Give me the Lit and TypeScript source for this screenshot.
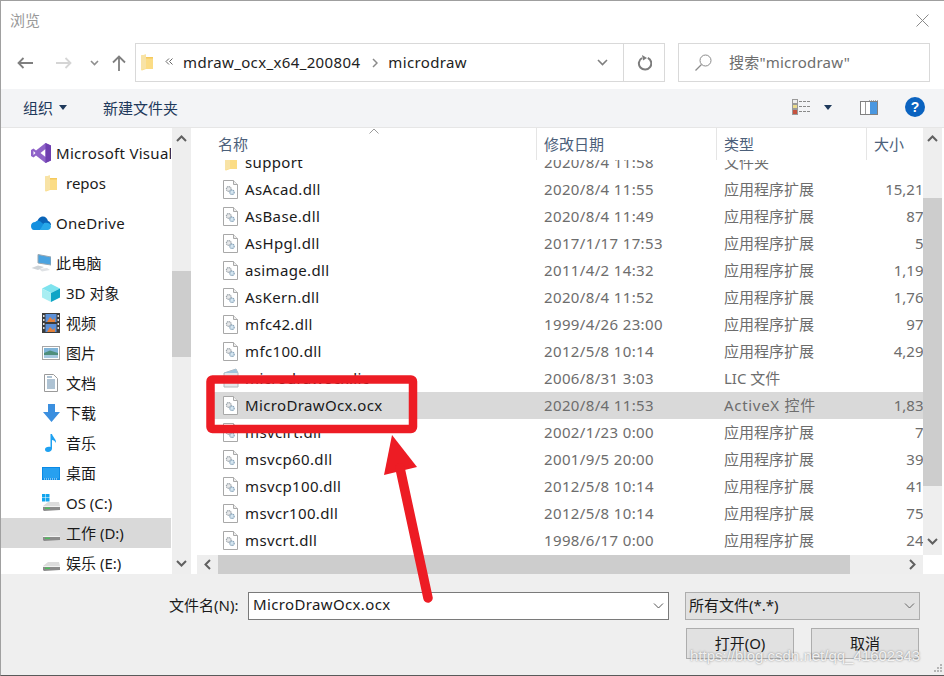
import { LitElement, html, css, svg } from "lit";
import { customElement } from "lit/decorators.js";

const folder = (w = 12, h = 17) => html`<svg class="ic" width=${w} height=${h} viewBox="0 0 12 17">
  <path d="M0 1.5 L5 0.5 L5 3 L12 3 L12 15 L5 15 L1 16.5 L0 16Z" fill="#fbdc85"/>
  <path d="M0 1.5 L5 0.5 L5 14.5 L0 16Z" fill="#f8e3a6"/><path d="M5 3 H12 V4.5 H5Z" fill="#f5c95c"/></svg>`;

const dll = html`<svg class="ic" width="15" height="19" viewBox="0 0 15 19">
  <path d="M0.5 0.5 H10.5 L14.5 4.5 V18.5 H0.5Z" fill="#fff" stroke="#a8a8a8"/>
  <path d="M10.5 0.5 V4.5 H14.5" fill="#eee" stroke="#a8a8a8"/>
  <circle cx="5.8" cy="9" r="2.4" fill="#e6e8ea" stroke="#9aa2a8" stroke-width="1.2" stroke-dasharray="1.2 .5"/>
  <circle cx="9" cy="12.3" r="2.2" fill="#d5e6f1" stroke="#86a2b8" stroke-width="1.2" stroke-dasharray="1.2 .5"/></svg>`;

const lic = html`<svg class="ic" width="17" height="21" viewBox="0 0 17 21">
  <path d="M2 5 L14 1 L16 5 L16 19 L2 19Z" fill="#e4e8ea" stroke="#b2b8bc"/><path d="M2 5 L14 1 L16 5Z" fill="#9fc4dc"/></svg>`;

const chevUp = html`<svg width="11" height="7" viewBox="0 0 11 7"><path d="M1 6 L5.5 1.5 L10 6" fill="none" stroke="#606060" stroke-width="2"/></svg>`;
const chevDown = html`<svg width="11" height="7" viewBox="0 0 11 7"><path d="M1 1 L5.5 5.5 L10 1" fill="none" stroke="#606060" stroke-width="2"/></svg>`;
const chevLeft = html`<svg width="7" height="11" viewBox="0 0 7 11"><path d="M6 1 L1.5 5.5 L6 10" fill="none" stroke="#606060" stroke-width="2"/></svg>`;
const chevRight = html`<svg width="7" height="11" viewBox="0 0 7 11"><path d="M1 1 L5.5 5.5 L1 10" fill="none" stroke="#606060" stroke-width="2"/></svg>`;
const thin = (c: string) => html`<svg width="11" height="6" viewBox="0 0 11 6"><path d="M1 0.5 L5.5 5 L10 0.5" fill="none" stroke=${c} stroke-width="1"/></svg>`;

const drive = (win = false) => html`<svg class="ic" width="20" height="18" viewBox="0 0 20 18">
  ${win ? svg`<g fill="#12a5ee"><rect x="1" y="0" width="3.5" height="3.5"/><rect x="5" y="0" width="3.5" height="3.5"/><rect x="1" y="4" width="3.5" height="3.5"/><rect x="5" y="4" width="3.5" height="3.5"/></g>` : ""}
  <path d="M2 12 L7 8 L18 8 L19 12Z" fill="#dcdcdc"/><path d="M2 12 H19 V16 L3 17 L2 16Z" fill="#8b8b8b"/><path d="M4 13.5 H9 V15 H4Z" fill="#4fbb5d"/><path d="M2 12 H19 V13 H2Z" fill="#f2f2f2"/></svg>`;

const navIcons: Record<string, unknown> = {
  vs: html`<svg class="ic" width="20" height="20" viewBox="0 0 20 20">
    <path d="M14.5 0 L20 2.5 V17.5 L14.5 20 L5 12.5 L2.5 14.5 L0 13 V7 L2.5 5.5 L5 7.5Z" fill="#8f63c8"/>
    <path d="M14.5 6 L9.5 10 L14.5 14Z M2.5 8 V12 L4.5 10Z" fill="#fff"/><path d="M14.5 0 L20 2.5 V17.5 L14.5 20Z" fill="#6f3fb0"/></svg>`,
  cloud: html`<svg class="ic" width="20" height="14" viewBox="0 0 20 14">
    <path d="M6 7 C6.5 3 9 0.5 12 0.5 C14.5 0.5 16 2 17 5 C18.8 5.5 20 7 20 9 L12 9Z" fill="#0a64b8"/>
    <path d="M0 10 C0 7.5 2 6 4.2 6 C6 4 9 4.5 10.5 6.5 L16 11 L9 14 H3 C1 14 0 12 0 10Z" fill="#1490df"/>
    <path d="M9 14 L13 7 C16 6 19.5 7 20 10 C20 12.5 18.5 14 16.5 14Z" fill="#28a8ea"/></svg>`,
  pc: html`<svg class="ic" width="20" height="18" viewBox="0 0 20 18">
    <path d="M7 0.5 L20 3 V11 L7 9Z" fill="#4aa3e0" stroke="#9aa7b0"/><path d="M0.5 14 L7 11.5 L13 13 L7 16Z" fill="#cfd4d8"/><path d="M8 15 L16 14 L19 16 L11 17.5Z" fill="#dfe2e5"/></svg>`,
  cube: html`<svg class="ic" width="18" height="18" viewBox="0 0 18 18">
    <path d="M9 0 L18 4.5 L9 9 L0 4.5Z" fill="#7fe3ee"/><path d="M0 4.5 L9 9 V18 L0 13.5Z" fill="#a9eef2"/><path d="M18 4.5 L9 9 V18 L18 13.5Z" fill="#0fa5c6"/></svg>`,
  film: html`<svg class="ic" width="18" height="20" viewBox="0 0 18 20">
    <rect width="18" height="20" fill="#3c3c3c"/><rect x="3.5" y="1" width="11" height="8" fill="#5b8fd6"/><rect x="3.5" y="11" width="11" height="8" fill="#5b8fd6"/>
    <path d="M5 9 L8 4 L11 7 L13 5 V9Z M5 19 L8 14 L11 17 L13 15 V19Z" fill="#e3813c"/>
    <g fill="#ddd"><rect x="1" y="2" width="1.5" height="2"/><rect x="1" y="6" width="1.5" height="2"/><rect x="1" y="10" width="1.5" height="2"/><rect x="1" y="14" width="1.5" height="2"/><rect x="15.5" y="2" width="1.5" height="2"/><rect x="15.5" y="6" width="1.5" height="2"/><rect x="15.5" y="10" width="1.5" height="2"/><rect x="15.5" y="14" width="1.5" height="2"/></g></svg>`,
  pic: html`<svg class="ic" width="18" height="14" viewBox="0 0 18 14">
    <rect x="0.5" y="0.5" width="17" height="13" fill="#fff" stroke="#a6a6a6"/><rect x="2" y="2" width="14" height="5" fill="#7fb4d8"/><path d="M2 7 L8 4.5 L16 7 V12 H2Z" fill="#4e8f7c"/><rect x="2" y="9" width="14" height="3" fill="#a6c9e0"/></svg>`,
  doc: html`<svg class="ic" width="14" height="18" viewBox="0 0 14 18">
    <path d="M0.5 0.5 H9.5 L13.5 4.5 V17.5 H0.5Z" fill="#fff" stroke="#9a9a9a"/><path d="M3 3 H8 M3 6 H11 M3 8 H11 M3 10 H11 M3 12 H11 M3 14 H11" stroke="#5f87a8" stroke-width="1"/></svg>`,
  dl: html`<svg class="ic" width="17" height="18" viewBox="0 0 17 18"><path d="M5 0 H12 V8 H17 L8.5 18 L0 8 H5Z" fill="#3b8fdf"/></svg>`,
  music: html`<svg class="ic" width="12" height="18" viewBox="0 0 12 18"><path d="M5.5 0 H7 C7.5 3 11.5 5 11 9 C10 7 8.5 6 7 6 V14.5 C7 16.5 5 18 3 18 C1 18 0 16.8 0 15.5 C0 13.5 2.5 12.3 5.5 13Z" fill="#1ea1f1"/></svg>`,
  desk: html`<svg class="ic" width="18" height="13" viewBox="0 0 18 13"><rect width="18" height="13" fill="#0a8ae6"/><rect x="1" y="1" width="16" height="10.5" fill="#27a0f0"/><path d="M2 12 H16" stroke="#e6f4ff" stroke-dasharray="1 1" stroke-width="1"/></svg>`,
  os: drive(true),
  drive: drive(false),
  folder: folder(12, 17),
};

const navGroups = [
  { sp: false, lv: 0, ic: "vs", t: "Microsoft Visual Studio" },
  { sp: false, lv: 1, ic: "folder", t: "repos" },
  { sp: true, lv: 0, ic: "cloud", t: "OneDrive" },
  { sp: true, lv: 0, ic: "pc", t: "此电脑" },
  { sp: false, lv: 1, ic: "cube", t: "3D 对象" },
  { sp: false, lv: 1, ic: "film", t: "视频" },
  { sp: false, lv: 1, ic: "pic", t: "图片" },
  { sp: false, lv: 1, ic: "doc", t: "文档" },
  { sp: false, lv: 1, ic: "dl", t: "下载" },
  { sp: false, lv: 1, ic: "music", t: "音乐" },
  { sp: false, lv: 1, ic: "desk", t: "桌面" },
  { sp: false, lv: 1, ic: "os", t: "OS (C:)" },
  { sp: false, lv: 1, ic: "drive", t: "工作 (D:)", sel: true },
  { sp: false, lv: 1, ic: "drive", t: "娱乐 (E:)" },
];

const X = "应用程序扩展";
const files = [
  ["support", "2020/8/4 11:58", "文件夹", "", "folder"],
  ["AsAcad.dll", "2020/8/4 11:55", X, "15,216 KB"],
  ["AsBase.dll", "2020/8/4 11:49", X, "876 KB"],
  ["AsHpgl.dll", "2017/1/17 17:53", X, "56 KB"],
  ["asimage.dll", "2011/4/2 14:32", X, "1,196 KB"],
  ["AsKern.dll", "2020/8/4 11:52", X, "1,768 KB"],
  ["mfc42.dll", "1999/4/26 23:00", X, "976 KB"],
  ["mfc100.dll", "2012/5/8 10:14", X, "4,296 KB"],
  ["microdrawocx.lic", "2006/8/31 3:03", "LIC 文件", "", "lic"],
  ["MicroDrawOcx.ocx", "2020/8/4 11:53", "ActiveX 控件", "1,836 KB", "sel"],
  ["msvcirt.dll", "2002/1/23 0:00", X, "76 KB"],
  ["msvcp60.dll", "2001/9/5 20:00", X, "396 KB"],
  ["msvcp100.dll", "2012/5/8 10:14", X, "416 KB"],
  ["msvcr100.dll", "2012/5/8 10:14", X, "756 KB"],
  ["msvcrt.dll", "1998/6/17 0:00", X, "246 KB"],
];

@customElement("app-root")
export class AppRoot extends LitElement {
  static styles = css`
    :host { display: block; width: 944px; height: 676px; overflow: hidden; position: relative; box-sizing: border-box;
      background: #efefef; border-top: 1px solid #9f9f9f; border-bottom: 1px solid #5a5a5a; border-left: 1px solid #a0a0a0;
      font-family: "Noto Sans", "Noto Sans CJK SC", sans-serif; font-size: 15px; color: #1a1a1a; }
    .ic { display: block; flex: none; }
    .lat { letter-spacing: 0.36px; }
    .title { height: 42px; background: #fff; display: flex; align-items: center; justify-content: space-between; padding: 0 15px 6px 9px; box-sizing: border-box; color: #999; }
    .title svg { margin-top: 2px; }
    .nav { height: 46px; background: #fff; display: flex; align-items: flex-start; box-sizing: border-box; padding-left: 16px; }
    .navbtns { display: flex; align-items: center; height: 39px; width: 118px; flex: none; }
    .navbtns svg { flex: none; display: block; }
    .addr { width: 530px; height: 39px; box-sizing: border-box; border: 1px solid #d9d9d9; display: flex; align-items: center; padding-left: 5px; flex: none; color: #222; }
    .addr .crumb { margin-left: 10px; white-space: nowrap; padding-bottom: 2px; }
    .addr .grow { flex: 1; }
    .addr .refresh { width: 40px; height: 37px; border-left: 1px solid #d9d9d9; display: flex; align-items: center; justify-content: center; margin-left: 15px; }
    .search { margin-left: 13px; width: 252px; height: 39px; box-sizing: border-box; border: 1px solid #d9d9d9; display: flex; align-items: center; padding-left: 16px; gap: 17px; color: #6d6d6d; flex: none; white-space: nowrap; }
    .search span { letter-spacing: 0.22px; padding-bottom: 2px; }
    .tools { height: 39px; box-sizing: border-box; background: #f3f4f6; border-bottom: 1px solid #e6e6e6; display: flex; align-items: center; padding: 0 19px 2px 22px; color: #1e395b; }
    .tools .org { display: flex; align-items: center; gap: 6px; width: 80px; }
    .tools .spacer { flex: 1; }
    .tools .right { display: flex; align-items: center; }
    .main { height: 446px; background: #fff; display: flex; }
    .side { width: 170px; margin-right: 1px; flex: none; overflow: hidden; padding-top: 10px; box-sizing: border-box; }
    .nitem { height: 30px; display: flex; align-items: center; white-space: nowrap; overflow: hidden; color: #1a1a1a; }
    .nitem .tx { padding-bottom: 1px; }
    .nitem.sp { margin-top: 10px; }
    .nitem .slot { flex: none; display: flex; justify-content: center; align-items: center; }
    .nitem.l0 { padding-left: 30px; }
    .nitem.l0 .slot { width: 20px; margin-right: 5px; }
    .nitem.l0 .tx { letter-spacing: 0.3px; }
    .nitem.l1 { padding-left: 40px; }
    .nitem.l1 .slot { width: 20px; margin-right: 5px; }
    .nitem.sel { background: #d9d9d9; }
    .vbar { width: 19px; flex: none; background: #eee; display: flex; flex-direction: column; }
    .vbar .arrow { height: 21px; display: flex; align-items: center; justify-content: center; flex: none; }
    .vbar .arrow.up2 { padding-bottom: 3px; }
    .vbar .track { flex: 1; min-height: 0; }
    .vbar .thumb { background: #cdcdcd; }
    .t1 { padding-top: 122px; } .t1 .thumb { height: 86px; }
    .t2 { padding-top: 49px; } .t2 .thumb { height: 288px; }
    .gap { width: 6px; flex: none; }
    .listwrap { width: 745px; flex: none; display: flex; flex-direction: column; }
    .listtop { height: 427px; display: flex; flex: none; }
    .list { width: 726px; flex: none; overflow: hidden; position: relative; }
    .head { height: 32px; display: grid; grid-template-columns: 340px 180px 150px 60px; color: #4c607a; position: relative; background: #fff; z-index: 1; }
    .head > div { box-sizing: border-box; padding: 0 0 0 7px; height: 32px; border-right: 1px solid #e5e5e5; line-height: 33px; }
    .head > div:first-child { padding-left: 21px; }
    .head > div:last-child { border-right: none; }
    .caret { position: absolute; left: 172px; top: 0; }
    .rows { margin-top: -11px; }
    .row { height: 27px; width: 742px; margin-left: 17px; padding-left: 8px; box-sizing: border-box; display: grid; grid-template-columns: 314px 180px 150px 89px; align-items: center; color: #6d6d6d; white-space: nowrap; }
    .row.sel { background: #d9d9d9; }
    .row .name { display: flex; align-items: center; gap: 6px; color: #1a1a1a; }
    .row .name .lat, .row .dc, .row .tc, .row .sc { padding-bottom: 2px; }
    .row .icbox { width: 17px; flex: none; display: flex; justify-content: center; }
    .row .dc { padding-left: 8px; letter-spacing: 0.36px; }
    .row .tc { padding-left: 8px; }
    .row .tc.wide { letter-spacing: 0.7px; }
    .row .sc { text-align: right; }
    .hbar { height: 19px; width: 726px; flex: none; background: #eee; display: flex; align-items: stretch; }
    .hbar .arrow { width: 21px; flex: none; display: flex; align-items: center; justify-content: center; }
    .hbar .thumb { width: 632px; flex: none; background: #cdcdcd; }
    .hbar .fill { flex: 1; }
    .foot { height: 100px; position: relative; box-sizing: border-box; padding: 17px 0 0 168px; display: grid; grid-template-columns: 79px 421px 16px 235px; grid-template-rows: 29px 31px; row-gap: 8px; align-items: center; }
    .foot .lb { padding-bottom: 2px; }
    .inp { height: 28px; box-sizing: border-box; border: 1px solid #7a7a7a; background: #fff; display: flex; align-items: center; justify-content: space-between; padding: 0 4px; color: #1a1a1a; }
    .inp .lat, .filter .lb2 { padding-bottom: 3px; }
    .filter { height: 28px; box-sizing: border-box; border: 1px solid #adadad; background: #e1e1e1; display: flex; align-items: center; justify-content: space-between; padding: 0 4px 0 3px; }
    .btns { grid-column: 4; display: flex; justify-content: space-between; padding: 0 1px; }
    .btn { width: 108px; height: 31px; box-sizing: border-box; border: 1px solid #adadad; background: #e1e1e1; display: flex; align-items: center; justify-content: center; padding-bottom: 3px; }
    .wm { position: absolute; left: 689px; top: 646px; font-family: "Liberation Sans", sans-serif; font-size: 15px; line-height: 18px; color: rgba(255,255,255,0.85); text-shadow: 0 0 2px rgba(90,90,90,0.75); white-space: nowrap; }
    .anno { position: absolute; left: -1px; top: -1px; pointer-events: none; }
    .grip { position: absolute; right: 1px; bottom: 1px; }
  `;

  render() {
    return html`
      <div class="title"><span>浏览</span>
        <svg width="13" height="13" viewBox="0 0 13 13"><path d="M0.5 0.5 L12.5 12.5 M12.5 0.5 L0.5 12.5" stroke="#8a8a8a" stroke-width="1"/></svg></div>
      <div class="nav">
        <div class="navbtns">
          <svg width="16" height="12" viewBox="0 0 16 12"><path d="M16 6 H1.5 M6.5 1 L1.5 6 L6.5 11" fill="none" stroke="#7f7f7f" stroke-width="1.8"/></svg>
          <svg style="margin-left:23px" width="16" height="12" viewBox="0 0 16 12"><path d="M0 6 H14.5 M9.5 1 L14.5 6 L9.5 11" fill="none" stroke="#d5d5d5" stroke-width="1.8"/></svg>
          <svg style="margin-left:18px" width="9" height="6" viewBox="0 0 9 6"><path d="M1 1 L4.5 4.5 L8 1" fill="none" stroke="#8f8f8f" stroke-width="1.6"/></svg>
          <svg style="margin-left:13px" width="14" height="16" viewBox="0 0 14 16"><path d="M7 16 V2 M1 7.5 L7 1.5 L13 7.5" fill="none" stroke="#7f7f7f" stroke-width="1.8"/></svg>
        </div>
        <div class="addr">
          ${folder(12, 17)}
          <svg style="margin-left:12px;margin-top:-3px" width="8" height="7" viewBox="0 0 8 7"><path d="M4 0.5 L1 3.5 L4 6.5 M7.5 0.5 L4.5 3.5 L7.5 6.5" fill="none" stroke="#666" stroke-width="1"/></svg>
          <span class="crumb lat">mdraw_ocx_x64_200804</span>
          <svg style="margin-left:12px" width="6" height="10" viewBox="0 0 6 10"><path d="M1 1 L5 5 L1 9" fill="none" stroke="#8a8a8a" stroke-width="1.5"/></svg>
          <span class="crumb lat">microdraw</span>
          <span class="grow"></span>
          <svg width="11" height="7" viewBox="0 0 11 7"><path d="M1 1 L5.5 5.5 L10 1" fill="none" stroke="#7f7f7f" stroke-width="1.6"/></svg>
          <div class="refresh"><svg width="15" height="16" viewBox="0 0 15 16"><path d="M5 3 A6.2 6.2 0 1 0 10.8 2.8" fill="none" stroke="#7c7c7c" stroke-width="2"/><path d="M5 0 L10 3 L6 5.5Z" fill="#7c7c7c"/></svg></div>
        </div>
        <div class="search">
          <svg width="17" height="17" viewBox="0 0 17 17"><circle cx="10.5" cy="6.5" r="5.5" fill="none" stroke="#8a8a8a" stroke-width="1"/><path d="M6.5 10.5 L0.5 16.5" stroke="#8a8a8a" stroke-width="1.2"/></svg>
          <span>搜索"microdraw"</span>
        </div>
      </div>
      <div class="tools">
        <div class="org"><span>组织</span><svg width="8" height="5" viewBox="0 0 8 5"><path d="M0 0 H8 L4 5Z" fill="#1e395b"/></svg></div>
        <span>新建文件夹</span>
        <span class="spacer"></span>
        <div class="right">
          <svg width="19" height="16" viewBox="0 0 19 16"><rect x="0.5" y="0.5" width="5" height="4" fill="#eee" stroke="#9a9a9a"/><rect x="0.5" y="5.5" width="5" height="4" fill="#eadb8c" stroke="#9a9a9a"/><rect x="0.5" y="10.5" width="5" height="5" fill="#c5523f" stroke="#9a9a9a"/><path d="M7 2.5 H19 M7 7.5 H19 M7 12.5 H19" stroke="#8a8a8a" stroke-dasharray="3 1"/></svg>
          <svg style="margin-left:13px" width="8" height="5" viewBox="0 0 8 5"><path d="M0 0 H8 L4 5Z" fill="#1e395b"/></svg>
          <svg style="margin-left:28px" width="18" height="15" viewBox="0 0 18 15"><rect x="0.5" y="1.5" width="17" height="13" fill="#fff" stroke="#808080"/><rect x="10" y="2" width="7" height="12" fill="#4a97e0"/><path d="M5.5 2 V14" stroke="#9a9a9a"/><path d="M9 0.5 H18" stroke="#aaa" stroke-dasharray="1 1"/></svg>
          <svg style="margin-left:27px" width="20" height="20" viewBox="0 0 20 20"><circle cx="10" cy="10" r="10" fill="#0b63c0"/><text x="10" y="15" text-anchor="middle" font-family="Liberation Sans" font-weight="700" font-size="14" fill="#fff">?</text></svg>
        </div>
      </div>
      <div class="main">
        <div class="side">
          ${navGroups.map((n) => html`<div class="nitem l${n.lv} ${n.sp ? "sp" : ""} ${(n as any).sel ? "sel" : ""}"><span class="slot">${navIcons[n.ic]}</span><span class="tx">${n.t}</span></div>`)}
        </div>
        <div class="vbar">
          <div class="arrow">${chevUp}</div>
          <div class="track t1"><div class="thumb"></div></div>
          <div class="arrow">${chevDown}</div>
        </div>
        <div class="gap"></div>
        <div class="listwrap">
          <div class="listtop">
            <div class="list">
              <div class="head">
                <div>名称</div><div>修改日期</div><div>类型</div><div>大小</div>
                <svg class="caret" width="10" height="6" viewBox="0 0 10 6"><path d="M0.5 5.5 L5 1 L9.5 5.5" fill="none" stroke="#9a9a9a"/></svg>
              </div>
              <div class="rows">
                ${files.map((f) => html`<div class="row ${f[4] === "sel" ? "sel" : ""}">
                  <div class="name"><span class="icbox">${f[4] === "folder" ? folder(12, 17) : f[4] === "lic" ? lic : dll}</span><span class="lat">${f[0]}</span></div>
                  <div class="dc">${f[1]}</div><div class="tc ${f[2].startsWith("Active") ? "wide" : ""}">${f[2]}</div><div class="sc">${f[3]}</div>
                </div>`)}
              </div>
            </div>
            <div class="vbar">
              <div class="arrow">${chevUp}</div>
              <div class="track t2"><div class="thumb"></div></div>
              <div class="arrow up2">${chevDown}</div>
            </div>
          </div>
          <div class="hbar">
            <div class="arrow">${chevLeft}</div>
            <div class="thumb"></div>
            <div class="fill"></div>
            <div class="arrow">${chevRight}</div>
          </div>
        </div>
      </div>
      <div class="foot">
        <span class="lb">文件名(N):</span>
        <div class="inp"><span class="lat">MicroDrawOcx.ocx</span>${thin("#555")}</div>
        <span></span>
        <div class="filter"><span class="lb2">所有文件(*.*)</span>${thin("#666")}</div>
        <div class="btns"><div class="btn">打开(O)</div><div class="btn">取消</div></div>
        <svg class="grip" width="9" height="9" viewBox="0 0 9 9"><g fill="#b5b5b5"><rect x="6" y="0" width="2" height="2"/><rect x="3" y="3" width="2" height="2"/><rect x="6" y="3" width="2" height="2"/><rect x="0" y="6" width="2" height="2"/><rect x="3" y="6" width="2" height="2"/><rect x="6" y="6" width="2" height="2"/></g></svg>
      </div>
      <div class="wm">https://blog.csdn.net/qq_41602343</div>
      <svg class="anno" width="944" height="676" viewBox="0 0 944 676">
        <rect x="210.5" y="379.5" width="202.5" height="49.5" rx="2" fill="none" stroke="#ed1c24" stroke-width="8.5"/>
        <path d="M392 435 L417 467 L384 475Z" fill="#ed1c24"/>
        <path d="M400 468 L428 598" fill="none" stroke="#ed1c24" stroke-width="9.5" stroke-linecap="round"/>
      </svg>
    `;
  }
}
